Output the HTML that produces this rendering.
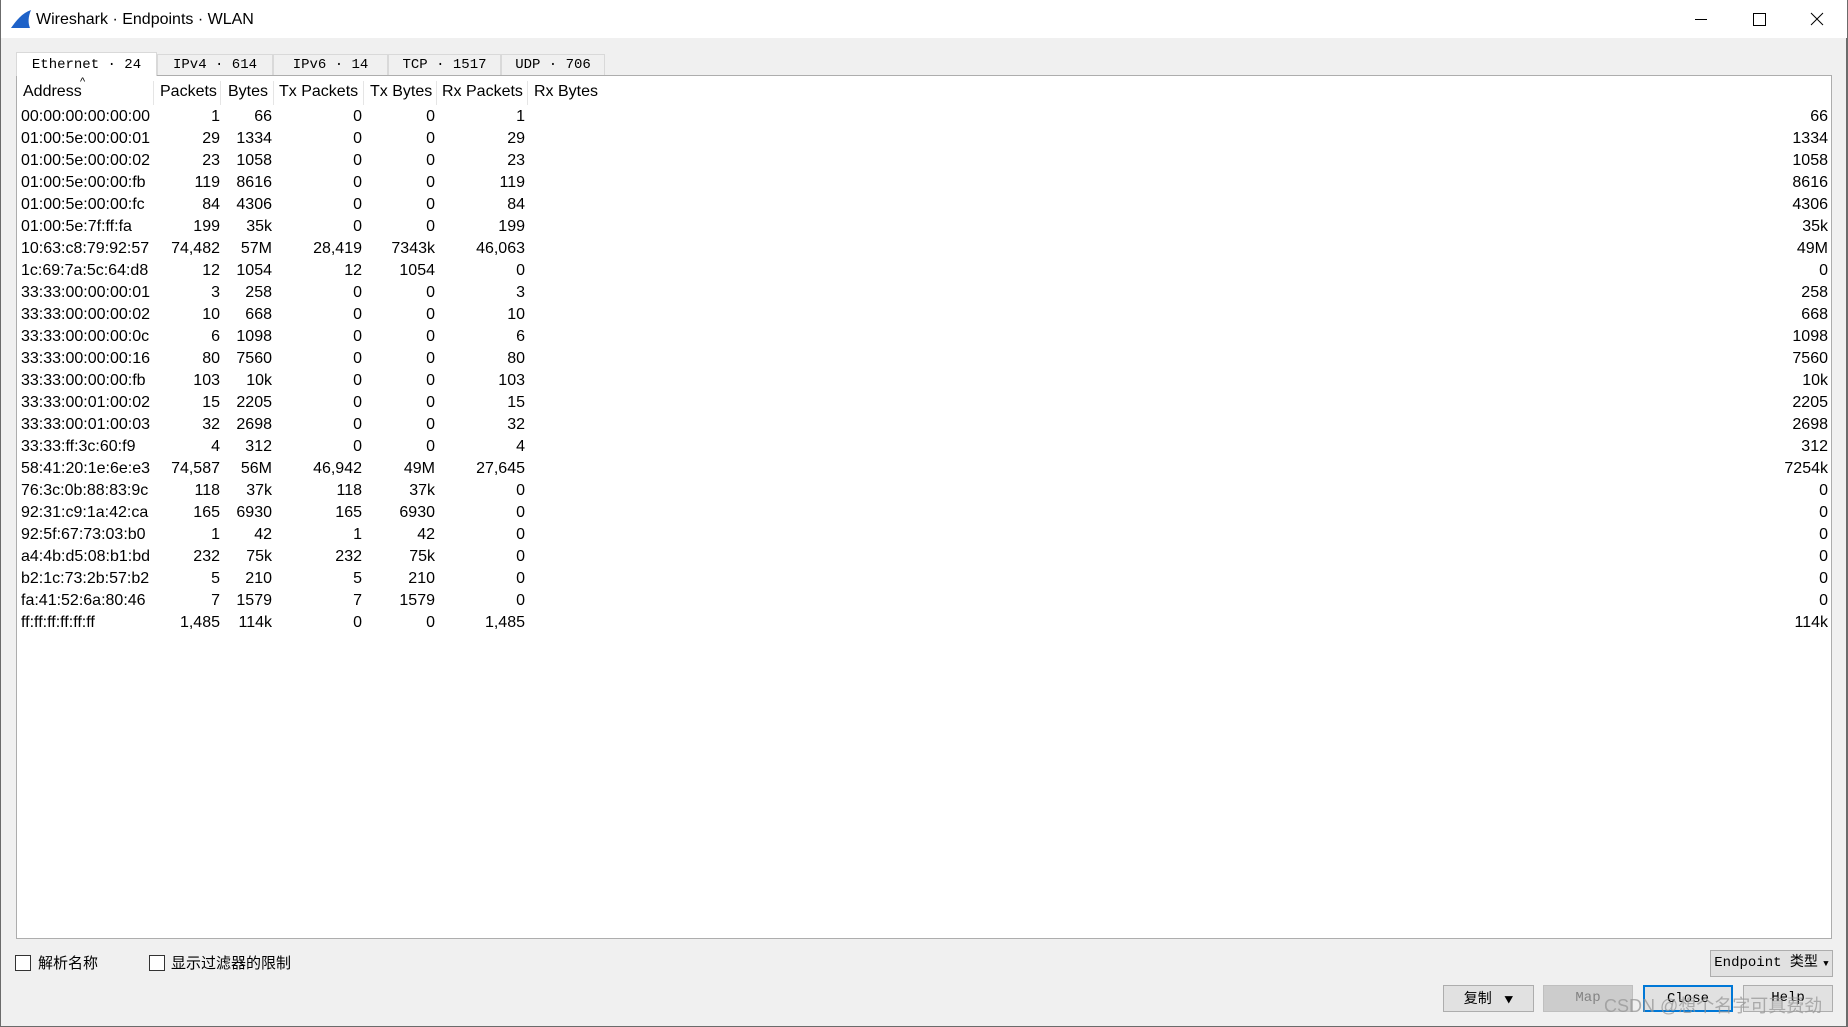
<!DOCTYPE html>
<html style="overflow:hidden"><head><meta charset="utf-8"><style>
*{margin:0;padding:0;box-sizing:border-box}
html,body{overflow:hidden}
body{width:1848px;height:1027px;background:#f0f0f0;font-family:"Liberation Sans","Noto Sans CJK SC",sans-serif;position:relative;border-right:2px solid #6b6b6b;border-left:1px solid #6b6b6b;border-bottom:1px solid #6b6b6b}
.title{position:absolute;left:0;top:0;width:1846px;height:38px;background:#fff;}
.title .t{position:absolute;left:35px;top:11px;font-size:16px;color:#000}
.abs{position:absolute}
.tab{position:absolute;top:54px;height:21px;border:1px solid #d9d9d9;border-bottom:none;background:#f0f0f0;font-family:"Liberation Mono","Noto Sans CJK SC",monospace;font-size:14px;text-align:center;line-height:21px;color:#000}
.frame{position:absolute;left:15px;top:75px;width:1816px;height:864px;background:#fff;border:1px solid #adadad}
.hd{position:absolute;top:81px;height:24px;font-size:16px;line-height:22px;border-right:1px solid #e5e5e5}
.row{position:absolute;left:0;width:1848px;height:22px;font-size:16px;line-height:22px}
.row span{position:absolute;text-align:right}
.btn{position:absolute;height:27px;background:#e1e1e1;border:1px solid #adadad;font-family:"Liberation Mono","Noto Sans CJK SC",monospace;font-size:14px;text-align:center;line-height:25px;white-space:nowrap}
.cb{position:absolute;top:955px;width:16px;height:16px;border:1px solid #333;background:#fff}
.lbl{position:absolute;top:952px;font-size:15px}
</style></head><body>
<div class="title">
<svg class="abs" style="left:9px;top:9px" width="22" height="20" viewBox="0 0 22 20"><path d="M1 19 C6 12 12 4 21 1 C18 8 18 14 20 19 Z" fill="#1e62c8"/></svg>
<div class="t">Wireshark · Endpoints · WLAN</div>
<svg class="abs" style="left:1692px;top:12px" width="16" height="16"><line x1="2" y1="7.5" x2="14" y2="7.5" stroke="#000"/></svg>
<svg class="abs" style="left:1750px;top:12px" width="16" height="16"><rect x="2.5" y="1.5" width="12" height="12" fill="none" stroke="#000"/></svg>
<svg class="abs" style="left:1808px;top:11px" width="16" height="16"><path d="M2 2 L14 14 M14 2 L2 14" stroke="#000"/></svg>
</div>
<div class="tab" style="left:15px;width:141px;background:#fff;top:52px;height:24px;line-height:24px;z-index:2">Ethernet · 24</div>
<div class="tab" style="left:156px;width:116px">IPv4 · 614</div>
<div class="tab" style="left:272px;width:115px">IPv6 · 14</div>
<div class="tab" style="left:387px;width:113px">TCP · 1517</div>
<div class="tab" style="left:500px;width:104px">UDP · 706</div>
<div class="frame"></div>
<div class="hd" style="left:22px;width:131px">Address<span class="abs" style="left:57px;top:-10px;font-size:11px">^</span></div>
<div class="hd" style="left:153px;width:67px;padding-left:6px">Packets</div>
<div class="hd" style="left:220px;width:53px;padding-left:7px">Bytes</div>
<div class="hd" style="left:273px;width:90px;padding-left:5px">Tx Packets</div>
<div class="hd" style="left:363px;width:73px;padding-left:6px">Tx Bytes</div>
<div class="hd" style="left:436px;width:91px;padding-left:5px">Rx Packets</div>
<div class="hd" style="left:527px;width:80px;padding-left:6px;border:none">Rx Bytes</div>
<div id="rows"></div>
<script>
var d=[["00:00:00:00:00:00","1","66","0","0","1","66"],["01:00:5e:00:00:01","29","1334","0","0","29","1334"],["01:00:5e:00:00:02","23","1058","0","0","23","1058"],["01:00:5e:00:00:fb","119","8616","0","0","119","8616"],["01:00:5e:00:00:fc","84","4306","0","0","84","4306"],["01:00:5e:7f:ff:fa","199","35k","0","0","199","35k"],["10:63:c8:79:92:57","74,482","57M","28,419","7343k","46,063","49M"],["1c:69:7a:5c:64:d8","12","1054","12","1054","0","0"],["33:33:00:00:00:01","3","258","0","0","3","258"],["33:33:00:00:00:02","10","668","0","0","10","668"],["33:33:00:00:00:0c","6","1098","0","0","6","1098"],["33:33:00:00:00:16","80","7560","0","0","80","7560"],["33:33:00:00:00:fb","103","10k","0","0","103","10k"],["33:33:00:01:00:02","15","2205","0","0","15","2205"],["33:33:00:01:00:03","32","2698","0","0","32","2698"],["33:33:ff:3c:60:f9","4","312","0","0","4","312"],["58:41:20:1e:6e:e3","74,587","56M","46,942","49M","27,645","7254k"],["76:3c:0b:88:83:9c","118","37k","118","37k","0","0"],["92:31:c9:1a:42:ca","165","6930","165","6930","0","0"],["92:5f:67:73:03:b0","1","42","1","42","0","0"],["a4:4b:d5:08:b1:bd","232","75k","232","75k","0","0"],["b2:1c:73:2b:57:b2","5","210","5","210","0","0"],["fa:41:52:6a:80:46","7","1579","7","1579","0","0"],["ff:ff:ff:ff:ff:ff","1,485","114k","0","0","1,485","114k"]];
var r=[219,271,361,434,524,1827],h="";
d.forEach(function(x,i){h+='<div class="row" style="top:'+(106+i*22)+'px"><span style="left:20px;text-align:left">'+x[0]+'</span>';for(var j=1;j<7;j++)h+='<span style="right:'+(1848-r[j-1])+'px">'+x[j]+'</span>';h+='</div>';});
document.getElementById('rows').innerHTML=h;
</script>
<div class="cb" style="left:14px"></div><div class="lbl" style="left:37px">解析名称</div>
<div class="cb" style="left:148px"></div><div class="lbl" style="left:170px">显示过滤器的限制</div>
<div class="btn" style="left:1709px;top:950px;width:123px">Endpoint 类型<span style="font-size:9px"> ▼</span></div>
<div class="btn" style="left:1442px;top:985px;width:91px;font-family:'Noto Sans CJK SC',sans-serif">复制 &nbsp;&nbsp;&nbsp;<span style="font-size:9px">▼</span></div>
<div class="btn" style="left:1542px;top:985px;width:90px;background:#cccccc;border-color:#bfbfbf;color:#838383">Map</div>
<div class="btn" style="left:1642px;top:985px;width:90px;border:2px solid #0078d7">Close</div>
<div class="btn" style="left:1742px;top:985px;width:90px">Help</div>
<div class="abs" style="left:1603px;top:992px;font-size:18px;white-space:nowrap;color:rgba(150,150,150,0.75)">CSDN @想个名字可真费劲</div>
</body></html>
